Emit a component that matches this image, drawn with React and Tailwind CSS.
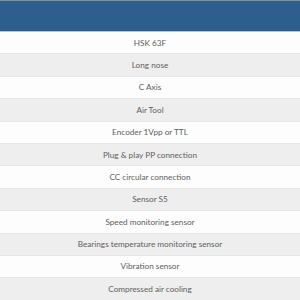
export default function App() {
  const rows = [
    "HSK 63F",
    "Long nose",
    "C Axis",
    "Air Tool",
    "Encoder 1Vpp or TTL",
    "Plug & play PP connection",
    "CC circular connection",
    "Sensor S5",
    "Speed monitoring sensor",
    "Bearings temperature monitoring sensor",
    "Vibration sensor",
    "Compressed air cooling",
  ];
  return (
    <div className="w-[300px] h-[300px] overflow-hidden bg-white" style={{ fontFamily: "Lato, 'Open Sans', sans-serif" }}>
      <div className="h-px bg-[#8a8f94]" />
      <div className="h-[31px] bg-[#2e5e8e] border-b border-[#a9c8e4]" />
      {rows.map((r, i) => (
        <div
          key={i}
          className={`h-[22.4px] flex items-center justify-center text-[8.2px] text-[#606060] border-b border-[#e6e6e6] ${i % 2 === 0 ? "bg-[#fdfdfd]" : "bg-[#eeeeee]"}`}
        >
          {r}
        </div>
      ))}
    </div>
  );
}
